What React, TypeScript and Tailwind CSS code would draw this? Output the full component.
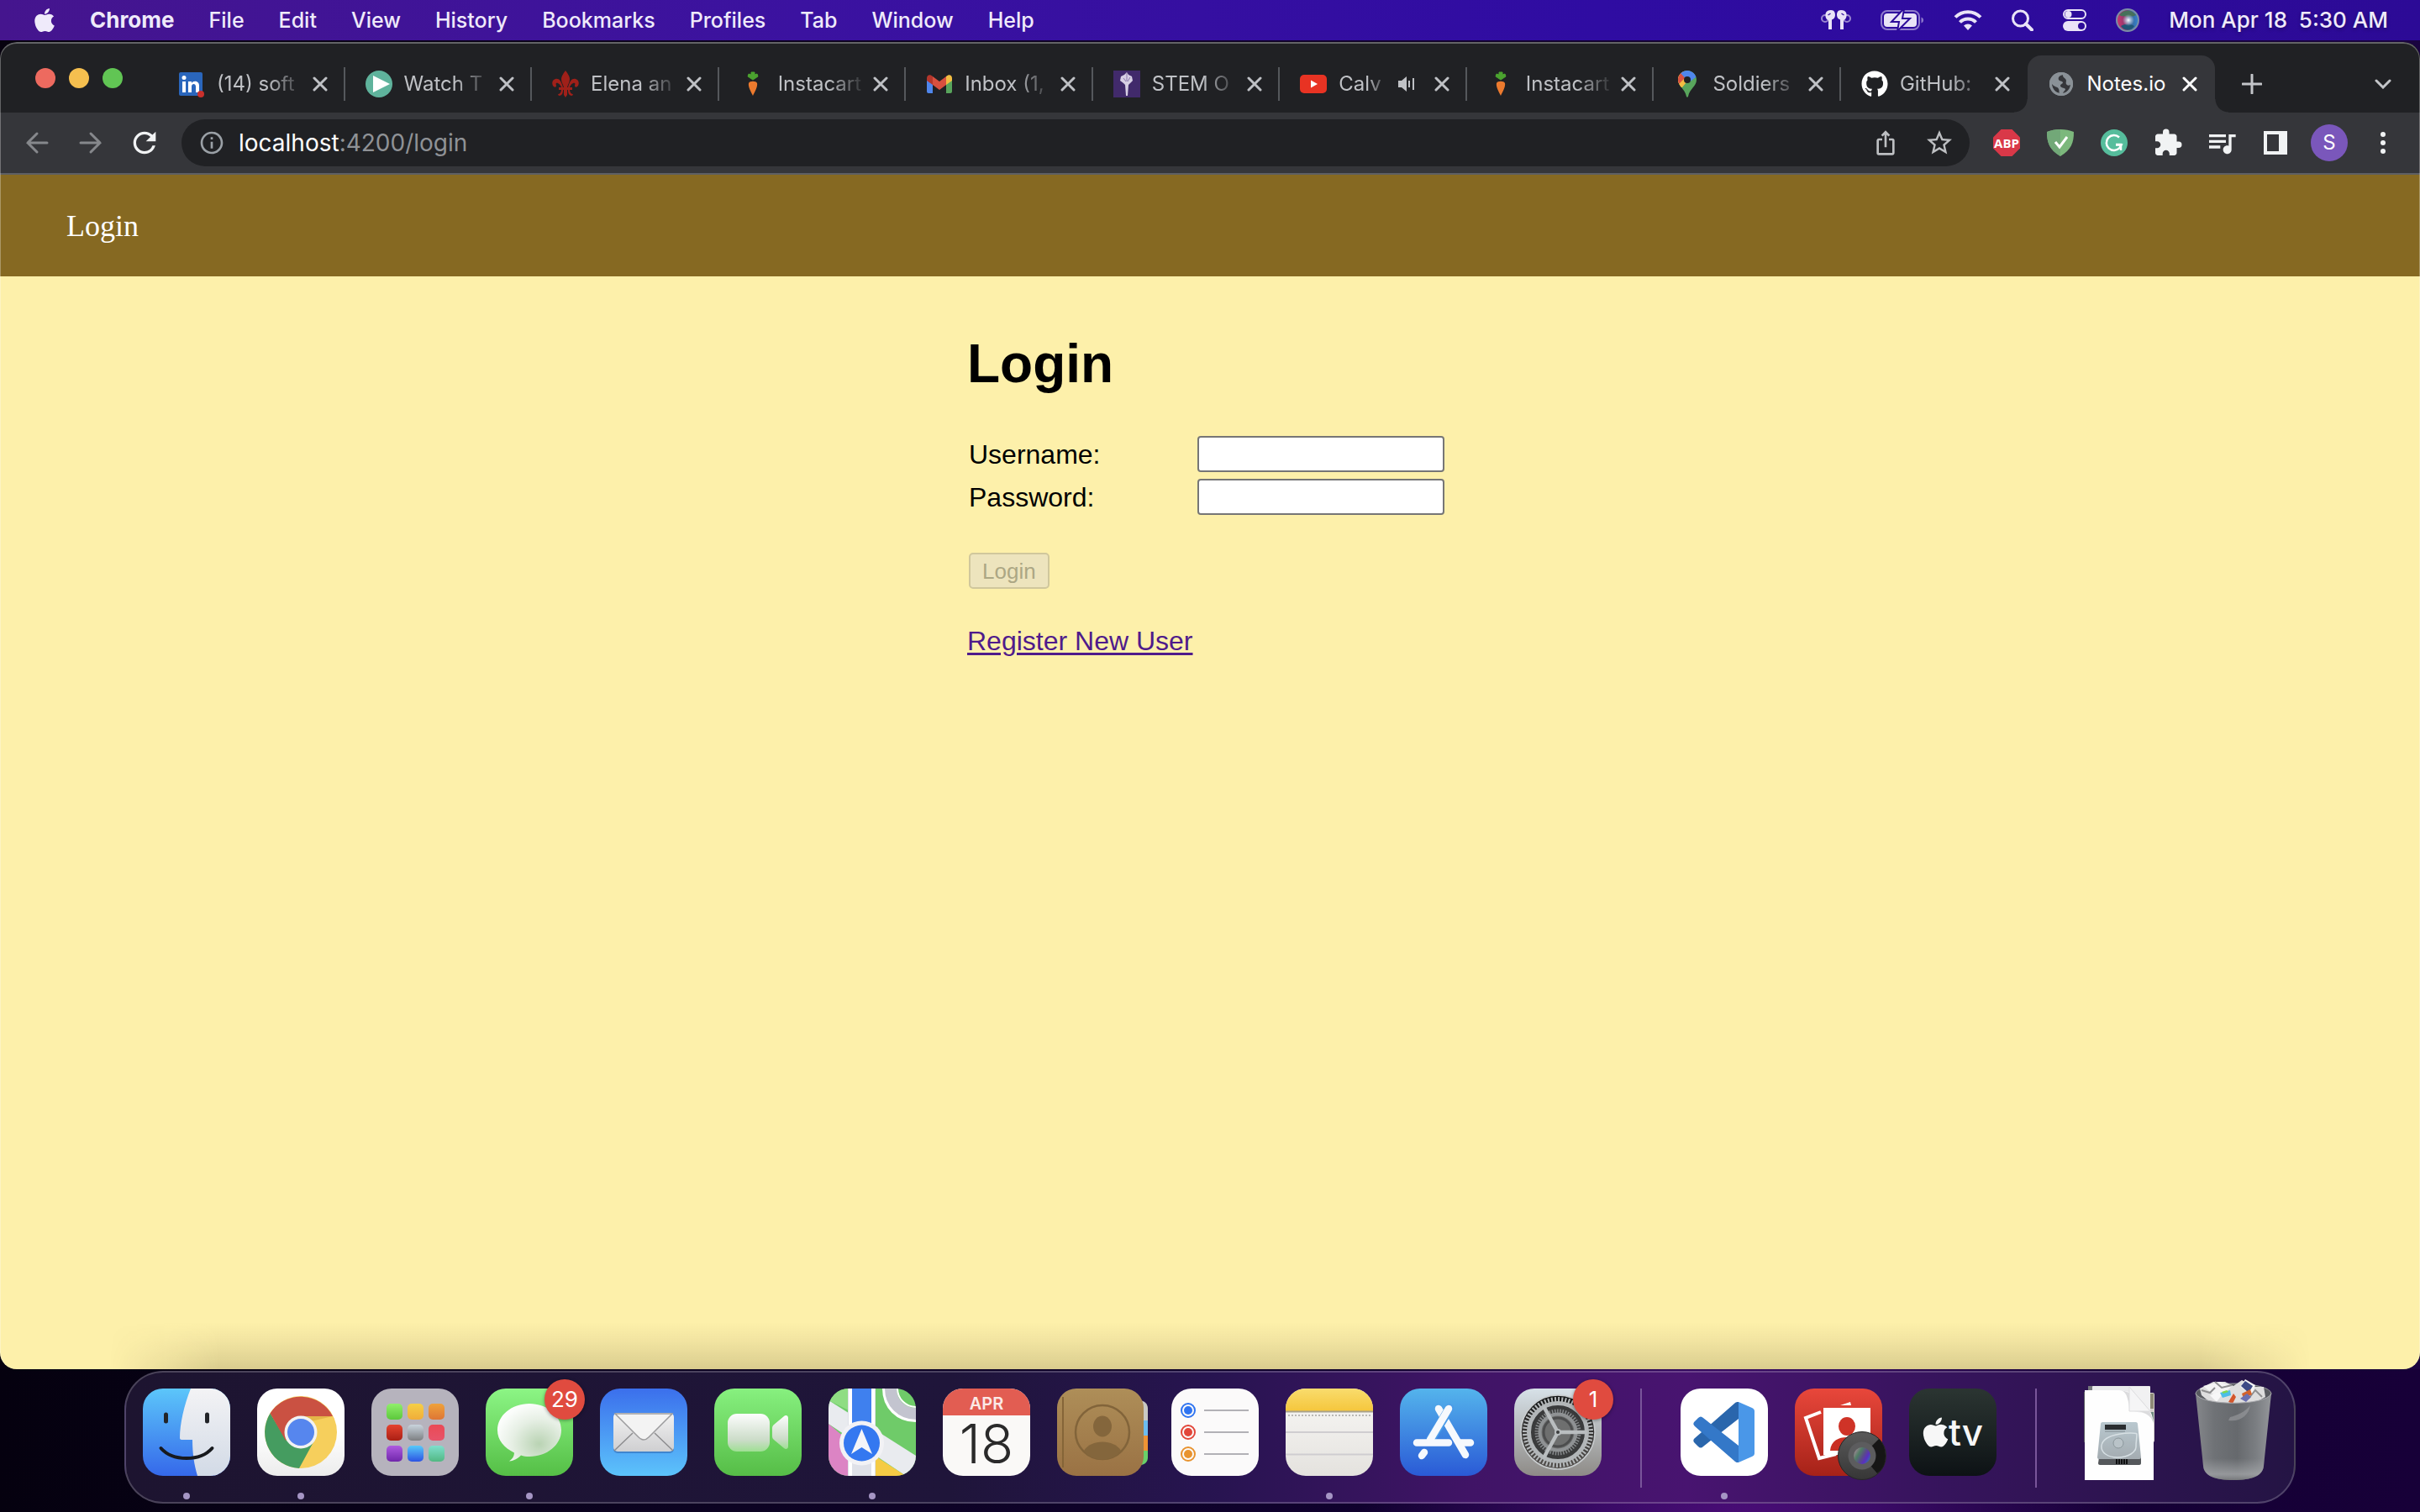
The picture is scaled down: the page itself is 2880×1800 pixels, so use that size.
import React from "react";
import { FaApple, FaGithub } from "react-icons/fa";
import {
  MdExtension,
  MdInfoOutline,
  MdIosShare,
  MdQueueMusic,
  MdRefresh,
  MdStarBorder,
} from "react-icons/md";

/* ---------- menu bar ---------- */

const menus = ["File", "Edit", "View", "History", "Bookmarks", "Profiles", "Tab", "Window", "Help"];

function AirPodsIcon() {
  return (
    <svg width="36" height="26" viewBox="0 0 36 26" aria-hidden="true">
      <circle cx="5" cy="11" r="4" fill="none" stroke="#9a86cf" strokeWidth="2" />
      <circle cx="31" cy="11" r="4" fill="none" stroke="#9a86cf" strokeWidth="2" />
      <path d="M12 1c4 0 5 3 5 6s-2 5-4 5.500V24H9V13C5 12 5 6 6 4s3-3 6-3z" fill="#e9e3f7" />
      <path d="M24 1c-4 0-5 3-5 6s2 5 4 5.500V24h4V13c4-1 4-7 3-9s-3-3-6-3z" fill="#e9e3f7" />
      <path d="M8.500 7l3-2M27.500 7l-3-2" stroke="#3a1a9f" strokeWidth="1.500" />
    </svg>
  );
}

function BatteryIcon() {
  return (
    <svg width="52" height="26" viewBox="0 0 52 26" aria-hidden="true">
      <rect x="1" y="2" width="45" height="22" rx="7" fill="none" stroke="#8f7bcc" strokeWidth="2" />
      <path d="M48.500 9.500c2 1 2.500 2 2.500 3.500s-.5 2.500-2.500 3.500z" fill="#8f7bcc" />
      <rect x="4" y="5" width="39" height="16" rx="4" fill="#e9e3f7" />
      <path d="M27 0L13 15h9l-2 11 15-15h-9l2-11z" fill="#e9e3f7" stroke="#2d0b99" strokeWidth="2" />
    </svg>
  );
}

function WifiIcon() {
  return (
    <svg width="34" height="26" viewBox="0 0 34 26" aria-hidden="true">
      <g fill="none" stroke="#e9e3f7" strokeWidth="4">
        <path d="M2 9.500C10 1 24 1 32 9.500" />
        <path d="M7.500 15.500c5-5.300 14-5.300 19 0" />
      </g>
      <path d="M12 19.500c3-2.700 7-2.700 10 0l-5 5.500z" fill="#e9e3f7" />
    </svg>
  );
}

function SpotlightIcon() {
  return (
    <svg width="26" height="26" viewBox="0 0 26 26" aria-hidden="true">
      <circle cx="10.500" cy="11" r="9" fill="none" stroke="#e9e3f7" strokeWidth="3" />
      <path d="M17 17.500l7 7" stroke="#e9e3f7" strokeWidth="4" strokeLinecap="round" />
    </svg>
  );
}

function ControlCenterIcon() {
  return (
    <svg width="28" height="26" viewBox="0 0 28 26" aria-hidden="true">
      <rect x="1" y="1" width="26" height="10" rx="5" fill="none" stroke="#e9e3f7" strokeWidth="2" />
      <circle cx="6.500" cy="6" r="4" fill="#e9e3f7" />
      <rect x="0" y="14" width="28" height="12" rx="6" fill="#e9e3f7" />
      <circle cx="22" cy="20" r="4" fill="#2d0b99" />
    </svg>
  );
}

function SiriIcon() {
  return (
    <svg width="28" height="28" viewBox="0 0 28 28" aria-hidden="true">
      <defs>
        <radialGradient id="siriGlow">
          <stop offset="0" stopColor="#ffffff" />
          <stop offset="0.350" stopColor="#dcebf8" stopOpacity="0.700" />
          <stop offset="1" stopColor="#cfe4f5" stopOpacity="0" />
        </radialGradient>
        <linearGradient id="siriBase" x1="0" y1="0.500" x2="1" y2="0.500">
          <stop offset="0" stopColor="#d0356f" />
          <stop offset="0.400" stopColor="#8d3b6e" />
          <stop offset="0.600" stopColor="#3d5f8f" />
          <stop offset="1" stopColor="#2f86d4" />
        </linearGradient>
      </defs>
      <circle cx="14" cy="14" r="13" fill="url(#siriBase)" stroke="#7c8ea6" strokeWidth="2" />
      <path d="M4 8C9 1 19 1 24 8c-3 2-7 1-10 2-3-1-7 0-10-2z" fill="#46705a" />
      <path d="M6 21c5-3 11-3 16 0-4 6-12 6-16 0z" fill="#1f5676" />
      <circle cx="15" cy="14" r="7" fill="url(#siriGlow)" />
    </svg>
  );
}

function MenuBar() {
  return (
    <header className="flex h-12 shrink-0 items-center justify-between bg-[linear-gradient(90deg,#45158e_0%,#3b12a0_33%,#2f0ca2_66%,#2c0a96_100%)] text-[26px] leading-8 text-[#efeafa] [text-shadow:0_2px_4px_rgba(0,0,0,0.3)]">
      <nav className="flex items-center gap-[41px] pl-10">
        <button aria-label="Apple menu" className="w-[26px]">
          <FaApple className="h-8 w-[26px]" />
        </button>
        <button className="font-bold">Chrome</button>
        {menus.map((m) => (
          <button key={m} className="text-[25px] font-medium">
            {m}
          </button>
        ))}
      </nav>
      <div className="flex items-center gap-[35px] pr-[38px]">
        <AirPodsIcon />
        <BatteryIcon />
        <WifiIcon />
        <SpotlightIcon />
        <ControlCenterIcon />
        <SiriIcon />
        <time className="font-medium whitespace-pre">Mon Apr 18  5:30 AM</time>
      </div>
    </header>
  );
}

/* ---------- browser tabs ---------- */

const LinkedInIcon = () => (
  <svg width="32" height="32" viewBox="0 0 32 32" aria-hidden="true">
    <rect x="1" y="2" width="28" height="28" rx="2" fill="#2a66bc" />
    <g fill="#fff">
      <rect x="5" y="13" width="4" height="13" />
      <circle cx="7" cy="8.500" r="2.500" />
      <path d="M12 13h4v2c2-3.500 9-3 9 3v8h-4v-7c0-4-5-4-5 0v7h-4z" />
    </g>
    <circle cx="27" cy="28" r="4" fill="#c9302c" />
  </svg>
);

const PlayIcon = () => (
  <svg width="32" height="32" viewBox="0 0 32 32" aria-hidden="true">
    <circle cx="16" cy="16" r="16" fill="#5fb39c" />
    <path d="M9 6l20 10L9 26z" fill="#fff" />
  </svg>
);

const FleurIcon = () => (
  <svg width="32" height="32" viewBox="0 0 32 32" aria-hidden="true" fill="#a02019">
    <path d="M16 0c3 4 5 7 5 10 0 4-2 6-3 10h-4c-1-4-3-6-3-10 0-3 2-6 5-10z" />
    <path d="M13 20C11 12 8 9 4 10c-4 1-5 6-2 9 1 1 3 1 3-1 0-1-1-2 0-3 2-1 5 2 6 5zM19 20c2-8 5-11 9-10 4 1 5 6 2 9-1 1-3 1-3-1 0-1 1-2 0-3-2-1-5 2-6 5z" />
    <rect x="8" y="20" width="16" height="3" />
    <path d="M14 23h4v6l-2 3-2-3zM11 23h2c0 4-1 7-5 7l-1-2c2 0 4-2 4-5zM21 23h-2c0 4 1 7 5 7l1-2c-2 0-4-2-4-5z" />
  </svg>
);

const CarrotIcon = () => (
  <svg width="32" height="32" viewBox="0 0 32 32" aria-hidden="true">
    <path d="M16 11l-6-4 1-3 3 1V2h4v3l3-1 1 3z" fill="#4ba32f" stroke="#4ba32f" strokeLinejoin="round" />
    <path d="M11 15c1-3 9-3 10 0 1 4-3 11-5 15-2-4-6-11-5-15z" fill="#ec7a2e" />
  </svg>
);

const GmailIcon = () => (
  <svg width="32" height="32" viewBox="0 0 32 32" aria-hidden="true">
    <path d="M1 10h7v17H3a2 2 0 01-2-2z" fill="#4f86ec" />
    <path d="M24 10h7v15a2 2 0 01-2 2h-5z" fill="#58a55c" />
    <path d="M24 13V7c3-3 7-2 7 2v3l-7 5z" fill="#f2bd42" />
    <path d="M1 12V9c0-4 4-5 7-2v10z" fill="#b3362c" />
    <path d="M8 7l8 6 8-6v10l-8 6-8-6z" fill="#d8503f" />
  </svg>
);

const TorchIcon = () => (
  <svg width="32" height="32" viewBox="0 0 32 32" aria-hidden="true">
    <rect width="32" height="32" fill="#412a6b" />
    <path d="M16 2l2 3 4 2 1 5-3 3-2 2-1 13h-2l-1-13-2-2-4-3 1-5 4-2z" fill="#d7cfe4" />
    <path d="M16 3v10M12 9l3 4M20 8l-3 5" stroke="#8b78ab" />
  </svg>
);

const YouTubeIcon = () => (
  <svg width="32" height="32" viewBox="0 0 32 32" aria-hidden="true">
    <rect y="5" width="32" height="22" rx="5" fill="#e83323" />
    <path d="M13 11.500l8 4.500-8 4.500z" fill="#fff" />
  </svg>
);

const MapPinIcon = () => (
  <svg width="32" height="32" viewBox="0 0 32 32" aria-hidden="true">
    <defs>
      <clipPath id="pinShape">
        <path d="M16 0c6 0 11 5 11 11 0 8-8 10-10 20-.3 1-1.700 1-2 0C13 21 5 19 5 11 5 5 10 0 16 0z" />
      </clipPath>
    </defs>
    <g clipPath="url(#pinShape)">
      <rect width="32" height="32" fill="#58a55c" />
      <path d="M0 0h12l8 8-10 12H0z" fill="#f2bd42" />
      <path d="M3 8l5-5 8 8-8 9z" fill="#f2bd42" />
      <path d="M0 0h10l4 8-8 8H0z" fill="#d85140" />
      <path d="M8 3l4-4h18v6L18 14z" fill="#4f86ec" />
    </g>
    <circle cx="16" cy="11" r="4" fill="#202124" />
  </svg>
);

const GlobeIcon = () => (
  <svg width="32" height="32" viewBox="0 0 32 32" aria-hidden="true">
    <circle cx="16" cy="16" r="14" fill="#8a9197" />
    <path
      d="M18 5c-4 1-6 3-5 6 1 2 4 1 5 3 0 2-3 2-3 4 0 3 5 2 6 4 0 2-3 3-3 6 6-1 9-6 9-11-2 1-4 1-5-1s1-4-1-6-3-2-3-5z"
      fill="#35363a"
    />
    <path d="M5 16c0 6 4 10 9 11-1-2 0-3-1-5-1-3-5-2-8-6z" fill="#35363a" />
    <circle cx="16" cy="16" r="12.500" fill="none" stroke="#8a9197" strokeWidth="3" />
  </svg>
);

const SpeakerIcon = () => (
  <svg width="20" height="20" viewBox="0 0 20 20" aria-hidden="true" className="shrink-0">
    <path d="M0 6h4l6-5v18l-6-5H0z" fill="#bfc1c5" />
    <path d="M13 6v8M18 3v14" stroke="#bfc1c5" strokeWidth="2" />
  </svg>
);

type TabItem = { title: string; icon: React.ReactNode; audio?: boolean };

const tabs: TabItem[] = [
  { title: "(14) soft", icon: <LinkedInIcon /> },
  { title: "Watch T", icon: <PlayIcon /> },
  { title: "Elena an", icon: <FleurIcon /> },
  { title: "Instacart", icon: <CarrotIcon /> },
  { title: "Inbox (1,", icon: <GmailIcon /> },
  { title: "STEM O", icon: <TorchIcon /> },
  { title: "Calv", icon: <YouTubeIcon />, audio: true },
  { title: "Instacart", icon: <CarrotIcon /> },
  { title: "Soldiers", icon: <MapPinIcon /> },
  { title: "GitHub:", icon: <FaGithub className="size-8 text-white" /> },
];

function CloseButton({ label, color }: { label: string; color: string }) {
  return (
    <button aria-label={`Close ${label}`} className="flex size-8 shrink-0 items-center justify-center">
      <svg width="18" height="18" viewBox="0 0 18 18" aria-hidden="true">
        <path d="M2 2l14 14M16 2L2 16" stroke={color} strokeWidth="3" strokeLinecap="round" />
      </svg>
    </button>
  );
}

function TabStrip() {
  return (
    <div className="flex h-[82px] bg-[#202124]">
      <div className="flex items-center gap-4 px-[42px]">
        <button aria-label="Close window" className="size-6 rounded-full bg-[#ed6a5f]" />
        <button aria-label="Minimize window" className="size-6 rounded-full bg-[#f5bf4f]" />
        <button aria-label="Zoom window" className="size-6 rounded-full bg-[#61c554]" />
      </div>
      <div role="tablist" className="flex h-[68px] min-w-0 flex-1 self-end text-2xl">
        {tabs.map((t, i) => (
          <div key={i} className="flex min-w-0 flex-1 basis-0 items-center">
            <div role="tab" className="flex min-w-0 flex-1 items-center pl-6">
              <span className="mr-3.5 size-8 shrink-0">{t.icon}</span>
              <span className="mr-1.5 min-w-0 flex-1 overflow-hidden whitespace-nowrap text-[#bfc1c5] [mask-image:linear-gradient(to_right,black_60%,transparent_105%)]">
                {t.title}
              </span>
              {t.audio && (
                <span className="mr-4 ml-2">
                  <SpeakerIcon />
                </span>
              )}
            </div>
            <CloseButton label={t.title} color="#bfc1c5" />
            <span className={i < tabs.length - 1 ? "ml-3 h-10 w-0.5 bg-[#55585c]" : "ml-3 h-10 w-0.5"} />
          </div>
        ))}
        <div className="relative flex min-w-0 flex-1 basis-0 items-center rounded-t-2xl bg-[#35363a]">
          <span className="absolute bottom-0 -left-4 size-4 bg-[radial-gradient(circle_at_0_0,transparent_15px,#35363a_16px)]" />
          <span className="absolute -right-4 bottom-0 size-4 bg-[radial-gradient(circle_at_100%_0,transparent_15px,#35363a_16px)]" />
          <div role="tab" aria-selected="true" className="flex min-w-0 flex-1 items-center pl-6">
            <span className="mr-3.5 size-8 shrink-0">
              <GlobeIcon />
            </span>
            <span className="whitespace-nowrap text-white">Notes.io</span>
          </div>
          <CloseButton label="Notes.io" color="#ffffff" />
          <span className="ml-3 w-0.5" />
        </div>
      </div>
      <div className="flex h-[68px] w-[244px] items-center justify-between self-end px-7">
        <button aria-label="New tab" className="flex size-8 items-center justify-center">
          <svg width="24" height="24" viewBox="0 0 24 24" aria-hidden="true">
            <path d="M12 1v22M1 12h22" stroke="#c3c5c9" strokeWidth="3" strokeLinecap="round" />
          </svg>
        </button>
        <button aria-label="Search tabs" className="flex size-8 items-center justify-center">
          <svg width="20" height="12" viewBox="0 0 20 12" aria-hidden="true">
            <path d="M2 2l8 8 8-8" fill="none" stroke="#c3c5c9" strokeWidth="3" strokeLinecap="round" />
          </svg>
        </button>
      </div>
    </div>
  );
}

/* ---------- browser toolbar ---------- */

function ArrowIcon({ flip }: { flip?: boolean }) {
  return (
    <svg width="28" height="28" viewBox="0 0 28 28" aria-hidden="true" className={flip ? "rotate-180" : ""}>
      <path d="M26 14H3M14 3L3 14l11 11" fill="none" stroke="#86888c" strokeWidth="3" strokeLinecap="round" />
    </svg>
  );
}

function Toolbar() {
  return (
    <div className="flex h-[74px] items-center border-b-2 border-[#5d5f64] bg-[#35363a]">
      <div className="flex items-center gap-8 px-7">
        <button aria-label="Back" className="flex size-8 items-center justify-center">
          <ArrowIcon />
        </button>
        <button aria-label="Forward" className="flex size-8 items-center justify-center">
          <ArrowIcon flip />
        </button>
        <button aria-label="Reload" className="flex size-8 items-center justify-center">
          <MdRefresh className="size-10 shrink-0 text-[#f1f3f4]" />
        </button>
      </div>
      <div className="flex h-14 flex-1 items-center rounded-full bg-[#202124] px-5">
        <button aria-label="Site information" className="mr-4">
          <MdInfoOutline className="size-8 text-[#9aa0a6]" />
        </button>
        <div role="textbox" aria-label="Address" className="flex-1 text-[28px] leading-9 text-[#8f9296]">
          <span className="text-white">localhost</span>:4200/login
        </div>
        <div className="flex gap-8 text-[#bdbfc2]">
          <button aria-label="Share" className="flex size-8 items-center justify-center">
            <MdIosShare className="size-8 shrink-0" />
          </button>
          <button aria-label="Bookmark" className="flex size-8 items-center justify-center">
            <MdStarBorder className="size-9 shrink-0" />
          </button>
        </div>
      </div>
      <div className="flex items-center gap-8 px-7 text-[#f1f3f4]">
        <button aria-label="AdBlock" className="relative flex size-8 items-center justify-center">
          <svg width="32" height="32" viewBox="0 0 32 32" aria-hidden="true" className="absolute">
            <path d="M9.500 0h13L32 9.500v13L22.500 32h-13L0 22.500v-13z" fill="#d93848" />
          </svg>
          <span className="relative font-['Open_Sans'] text-[15px] leading-4 font-bold text-white">ABP</span>
        </button>
        <button aria-label="AdGuard">
          <svg width="32" height="32" viewBox="0 0 32 32" aria-hidden="true">
            <path d="M16 0c6 0 11 1 16 3 0 13-3 21-16 29C3 24 0 16 0 3c5-2 10-3 16-3z" fill="#7cb87c" />
            <path d="M16 0v32C3 24 0 16 0 3c5-2 10-3 16-3z" fill="#72a878" />
            <path d="M10 15l5 6 9-12" fill="none" stroke="#fff" strokeWidth="3" />
          </svg>
        </button>
        <button aria-label="Grammarly">
          <svg width="32" height="32" viewBox="0 0 32 32" aria-hidden="true">
            <circle cx="16" cy="16" r="16" fill="#56bd9c" />
            <path d="M22 9.500A9 9 0 1022.500 22l2-3.500H18" fill="none" stroke="#fff" strokeWidth="2.500" />
            <path d="M24 25v-7h-6" fill="none" stroke="#fff" strokeWidth="2.500" />
          </svg>
        </button>
        <button aria-label="Extensions" className="flex size-8 items-center justify-center">
          <MdExtension className="size-9 shrink-0" />
        </button>
        <button aria-label="Media controls" className="flex size-8 items-center justify-center">
          <MdQueueMusic className="size-10 shrink-0" />
        </button>
        <button aria-label="Side panel" className="flex size-8 items-center justify-center">
          <svg width="28" height="28" viewBox="0 0 28 28" aria-hidden="true">
            <path d="M0 0h28v28H0z M4 4v20h14V4z" fill="#f1f3f4" fillRule="evenodd" />
          </svg>
        </button>
        <button
          aria-label="Profile"
          className="-mx-1.5 flex size-11 items-center justify-center rounded-full bg-[#7a57bb] text-2xl text-white"
        >
          S
        </button>
        <button aria-label="Menu" className="flex size-8 items-center justify-center">
          <svg width="6" height="28" viewBox="0 0 6 28" aria-hidden="true" fill="#f1f3f4">
            <circle cx="3" cy="4" r="3" />
            <circle cx="3" cy="14" r="3" />
            <circle cx="3" cy="24" r="3" />
          </svg>
        </button>
      </div>
    </div>
  );
}

/* ---------- web page ---------- */

function LoginPage() {
  return (
    <div className="flex flex-1 flex-col bg-[#fdf0aa] font-['Liberation_Sans',sans-serif] text-black">
      <nav className="flex h-[121px] items-center bg-[#866922] pl-[79px]">
        <a href="#login" className="font-['Liberation_Serif',serif] text-4xl text-white">
          Login
        </a>
      </nav>
      <main className="mx-auto w-[578px] pt-[72px] text-[32px] leading-8">
        <h1 className="text-[64px] leading-[64px] font-bold">Login</h1>
        <form className="mt-[54px]">
          <div className="grid grid-cols-[274px_294px] items-center gap-y-2">
            <label htmlFor="username" className="pl-0.5">
              Username:
            </label>
            <input
              id="username"
              type="text"
              className="h-[43px] rounded-[4px] border-2 border-[#767676] bg-white px-1 text-[26px]"
            />
            <label htmlFor="password" className="pl-0.5">
              Password:
            </label>
            <input
              id="password"
              type="password"
              className="h-[43px] rounded-[4px] border-2 border-[#767676] bg-white px-1 text-[26px]"
            />
          </div>
          <button
            type="submit"
            disabled
            className="mt-[45px] ml-0.5 block h-[43px] rounded-[5px] border-2 border-[#d0c79c] bg-[#ede4bd] px-3.5 text-[26px] leading-8 text-[#aca784]"
          >
            Login
          </button>
        </form>
        <a
          href="#register"
          className="mt-[46px] inline-block text-[#4f1b8b] underline decoration-[3px] underline-offset-[3px]"
        >
          Register New User
        </a>
      </main>
      <div className="mx-auto mt-auto h-[56px] w-[91%] bg-[linear-gradient(to_bottom,transparent,rgba(60,45,20,0.06)_40%,rgba(60,45,20,0.18))] [mask-image:linear-gradient(to_right,transparent,black_5%,black_95%,transparent)]" />
    </div>
  );
}

/* ---------- dock ---------- */

function FinderIcon() {
  return (
    <svg viewBox="0 0 104 104" className="size-full" aria-hidden="true">
      <defs>
        <linearGradient id="finderBlue" x1="0" y1="0" x2="0" y2="1">
          <stop offset="0" stopColor="#5cc6fa" />
          <stop offset="1" stopColor="#3568ea" />
        </linearGradient>
        <linearGradient id="finderWhite" x1="0" y1="0" x2="0" y2="1">
          <stop offset="0" stopColor="#f3f3f5" />
          <stop offset="1" stopColor="#d2dae6" />
        </linearGradient>
      </defs>
      <rect width="104" height="104" fill="url(#finderBlue)" />
      <path d="M57 0C49 20 44 42 44 59c0 1 1 2 2 2h13c0 16 2 30 6 43h39V0z" fill="url(#finderWhite)" />
      <path d="M27.500 31v8M76.500 31v8" stroke="#222428" strokeWidth="5" strokeLinecap="round" />
      <path d="M21.500 71c14 16 47 16 61 0" fill="none" stroke="#17191d" strokeWidth="4" strokeLinecap="round" />
    </svg>
  );
}

function ChromeIcon() {
  return (
    <svg viewBox="0 0 104 104" className="size-full" aria-hidden="true">
      <defs>
        <linearGradient id="chromePlate" x1="0" y1="0" x2="0" y2="1">
          <stop offset="0.500" stopColor="#fff" />
          <stop offset="1" stopColor="#ececec" />
        </linearGradient>
      </defs>
      <rect width="104" height="104" fill="url(#chromePlate)" />
      <circle cx="52" cy="52" r="43" fill="#f6cf5c" />
      <path d="M15.500 29.500A43 43 0 0050 95L68 62 52 71 35 62z" fill="#459c60" />
      <path d="M15.500 29.500A43 43 0 0190 33H52L34 62z" fill="#ca5142" />
      <path d="M52 33h38l-26 6z" fill="#d9a43b" opacity="0.600" />
      <circle cx="52" cy="52" r="19.500" fill="#f2f2f2" />
      <circle cx="52" cy="52" r="16" fill="#5686ee" />
    </svg>
  );
}

const launchCells = [
  ["#90ef6b", "#5cc83c"],
  ["#f6cf46", "#f0ad3a"],
  ["#efa23b", "#de7635"],
  ["#e5432f", "#aa1f14"],
  ["#c9d4dd", "#7d7f82"],
  ["#ea4a55", "#e7546a"],
  ["#ae5be0", "#7027ab"],
  ["#57c9fa", "#2c53e3"],
  ["#7fdfcd", "#52b883"],
];

function LaunchpadIcon() {
  return (
    <div className="grid size-full grid-cols-[19px_19px_19px] place-content-center gap-[6px] bg-[#b6b3bd]">
      {launchCells.map(([a, b]) => (
        <span
          key={a}
          className="size-[19px] rounded-[5px]"
          style={{ backgroundImage: `linear-gradient(${a}, ${b})` }}
        />
      ))}
    </div>
  );
}

function MessagesIcon() {
  return (
    <svg viewBox="0 0 104 104" className="size-full" aria-hidden="true">
      <defs>
        <linearGradient id="msgGreen" x1="0" y1="0" x2="0" y2="1">
          <stop offset="0" stopColor="#8cf585" />
          <stop offset="1" stopColor="#55bf46" />
        </linearGradient>
        <radialGradient id="msgBubble" cx="0.650" cy="0.700" r="0.700">
          <stop offset="0" stopColor="#b9d3b3" />
          <stop offset="0.600" stopColor="#e6efe4" />
          <stop offset="1" stopColor="#fbfdfb" />
        </radialGradient>
      </defs>
      <rect width="104" height="104" fill="url(#msgGreen)" />
      <path
        d="M52 18c21 0 38 14 38 31.500S73 81 52 81c-4 0-7-.5-10-1.500-4 4-8 6.500-14 7 4-3 6-6 6-10-12-6-20-15-20-27C14 32 31 18 52 18z"
        fill="url(#msgBubble)"
      />
    </svg>
  );
}

function MailIcon() {
  return (
    <svg viewBox="0 0 104 104" className="size-full" aria-hidden="true">
      <defs>
        <linearGradient id="mailBlue" x1="0" y1="0" x2="0" y2="1">
          <stop offset="0" stopColor="#3b6fec" />
          <stop offset="1" stopColor="#5cc3fb" />
        </linearGradient>
        <linearGradient id="mailPaper" x1="0" y1="0" x2="0" y2="1">
          <stop offset="0" stopColor="#f2f2f2" />
          <stop offset="1" stopColor="#cfcfd1" />
        </linearGradient>
      </defs>
      <rect width="104" height="104" fill="url(#mailBlue)" />
      <rect x="16" y="31" width="72" height="46" rx="5" fill="#2c5da8" opacity="0.500" />
      <rect x="16" y="29" width="72" height="46" rx="5" fill="url(#mailPaper)" />
      <path d="M17 74l22-21M87 74L65 53" stroke="#8d8d8f" strokeWidth="1.500" />
      <path d="M18 30l28 28c4 4 8 4 12 0l28-28z" fill="#f3f3f3" stroke="#9c9c9e" strokeWidth="1.500" />
    </svg>
  );
}

function FaceTimeIcon() {
  return (
    <svg viewBox="0 0 104 104" className="size-full" aria-hidden="true">
      <defs>
        <linearGradient id="ftWhite" x1="0" y1="0" x2="0" y2="1">
          <stop offset="0" stopColor="#fdfdfd" />
          <stop offset="0.700" stopColor="#cbdcc8" />
          <stop offset="1" stopColor="#9fdf94" />
        </linearGradient>
        <linearGradient id="ftGreen" x1="0" y1="0" x2="0" y2="1">
          <stop offset="0" stopColor="#87f07f" />
          <stop offset="1" stopColor="#56bd47" />
        </linearGradient>
      </defs>
      <rect width="104" height="104" fill="url(#ftGreen)" />
      <rect x="16" y="30" width="50" height="45" rx="11" fill="url(#ftWhite)" />
      <path d="M69 47c0-2 1-3 2-4l12-10c2-2 5-1 5 2v34c0 3-3 4-5 2L71 61c-1-1-2-2-2-4z" fill="url(#ftWhite)" />
    </svg>
  );
}

function MapsIcon() {
  return (
    <svg viewBox="0 0 104 104" className="size-full" aria-hidden="true">
      <rect width="104" height="104" fill="#6fcb69" />
      <path d="M0 0h24v26L0 14z" fill="#8fdd83" />
      <path d="M0 42l26 22v40H0z" fill="#dc84c4" />
      <path d="M0 14l104 66v24H92L0 42z" fill="#e9ebef" />
      <path d="M55 80l37 24H55z" fill="#f5cb45" />
      <rect x="23" width="33" height="104" fill="#dfe1e8" />
      <rect x="24" width="4" height="104" fill="#fff" />
      <rect x="51" width="4" height="104" fill="#fff" />
      <rect x="28" width="23" height="60" fill="#3f80ee" />
      <path d="M66 0c0 22 16 38 38 38" fill="none" stroke="#fff" strokeWidth="4" />
      <path d="M74 0c0 17 13 30 30 30" fill="none" stroke="#c3c4cf" strokeWidth="14" />
      <path d="M82 0c0 12 10 22 22 22" fill="none" stroke="#fff" strokeWidth="2" />
      <circle cx="39.500" cy="65" r="26.500" fill="#f2f2f5" />
      <circle cx="39.500" cy="65" r="21.500" fill="#3478f0" />
      <path d="M39.500 48L52 78l-12.500-8L27 78z" fill="#f4f5f8" />
    </svg>
  );
}

function CalendarIcon() {
  return (
    <div className="flex size-full flex-col items-center bg-[#faf9f7]">
      <span className="h-8 w-full bg-[#e25d52] pt-1 text-center text-xl leading-7 font-semibold text-[#fbe9e6]">
        APR
      </span>
      <span className="text-[64px] leading-[68px] font-light text-[#2a2a2a]">18</span>
    </div>
  );
}

function ContactsIcon() {
  return (
    <svg viewBox="0 0 110 104" className="h-[104px] w-[110px] max-w-none" aria-hidden="true">
      <defs>
        <linearGradient id="leather" x1="0" y1="0" x2="0" y2="1">
          <stop offset="0" stopColor="#ae8e58" />
          <stop offset="1" stopColor="#9a7244" />
        </linearGradient>
      </defs>
      <path d="M96 14c8 0 12 4 12 10v14H96z" fill="#c9c9c4" />
      <rect x="96" y="38" width="12" height="18" fill="#6cbcf0" />
      <rect x="96" y="56" width="12" height="18" fill="#ee9334" />
      <path d="M96 74h12v8c0 6-4 9-12 10z" fill="#68d069" />
      <rect width="103" height="104" rx="23" fill="url(#leather)" />
      <path d="M7 10v84" stroke="#856538" strokeWidth="2" />
      <circle cx="54" cy="52" r="32" fill="none" stroke="#82643a" strokeWidth="2.500" />
      <ellipse cx="54" cy="45" rx="11" ry="12.500" fill="#84663c" />
      <path d="M32 74c8-14 36-14 44 0-10 14-34 14-44 0z" fill="#84663c" />
    </svg>
  );
}

function RemindersIcon() {
  return (
    <svg viewBox="0 0 104 104" className="size-full" aria-hidden="true">
      <rect width="104" height="104" fill="#fbfafa" />
      {[
        [26, "#2f74f1"],
        [52, "#e2463a"],
        [78, "#e8932f"],
      ].map(([y, c]) => (
        <g key={c}>
          <circle cx="20" cy={y} r="8" fill="none" stroke={c as string} strokeWidth="2" />
          <circle cx="20" cy={y} r="5" fill={c as string} />
          <path d={`M39 ${y}h53`} stroke="#b2b1b6" strokeWidth="2" />
        </g>
      ))}
    </svg>
  );
}

function NotesIcon() {
  return (
    <svg viewBox="0 0 104 104" className="size-full" aria-hidden="true">
      <defs>
        <linearGradient id="notesTop" x1="0" y1="0" x2="0" y2="1">
          <stop offset="0" stopColor="#f9dc6d" />
          <stop offset="1" stopColor="#f5c63c" />
        </linearGradient>
        <linearGradient id="notesPaper" x1="0" y1="0" x2="0" y2="1">
          <stop offset="0" stopColor="#f9f8f6" />
          <stop offset="1" stopColor="#e4e2de" />
        </linearGradient>
      </defs>
      <rect width="104" height="104" fill="url(#notesPaper)" />
      <rect width="104" height="27" fill="url(#notesTop)" />
      <path d="M0 27.500h104" stroke="#a9a18b" strokeWidth="2" />
      <path d="M3 32h100" stroke="#b9b8b6" strokeWidth="2" strokeDasharray="2 2" />
      <path d="M0 52h104M0 78.500h104" stroke="#cfcdd0" strokeWidth="2" />
    </svg>
  );
}

function AppStoreIcon() {
  return (
    <svg viewBox="0 0 104 104" className="size-full" aria-hidden="true">
      <defs>
        <linearGradient id="storeBlue" x1="0" y1="0" x2="0" y2="1">
          <stop offset="0" stopColor="#54b4ec" />
          <stop offset="1" stopColor="#2a5ad6" />
        </linearGradient>
      </defs>
      <rect width="104" height="104" fill="url(#storeBlue)" />
      <g stroke="#f6f9fd" strokeWidth="8.500" strokeLinecap="round">
        <path d="M46 24L78 79" />
        <path d="M59 24L37 60" stroke="#4a9be8" strokeWidth="11" />
        <path d="M58 24L36 61" />
        <path d="M20 64.500h38M72 64.500h12" />
        <path d="M29 76l-3 4" />
      </g>
    </svg>
  );
}

function SettingsIcon() {
  return (
    <svg viewBox="0 0 104 104" className="size-full" aria-hidden="true">
      <defs>
        <linearGradient id="setPlate" x1="0" y1="0" x2="0" y2="1">
          <stop offset="0" stopColor="#d7e1e8" />
          <stop offset="1" stopColor="#8e8b87" />
        </linearGradient>
        <linearGradient id="setWell" x1="0" y1="0" x2="0" y2="1">
          <stop offset="0" stopColor="#131516" />
          <stop offset="1" stopColor="#55514e" />
        </linearGradient>
      </defs>
      <rect width="104" height="104" fill="url(#setPlate)" />
      <circle cx="52" cy="52" r="44" fill="url(#setWell)" stroke="#c8ccce" strokeWidth="1.500" />
      <circle cx="52" cy="52" r="39" fill="none" stroke="#b4b8ba" strokeWidth="6" strokeDasharray="2 2.080" />
      <circle cx="52" cy="52" r="34.500" fill="#3a3b3c" stroke="#b2b6b8" strokeWidth="5" />
      <circle cx="52" cy="52" r="25" fill="none" stroke="#85888a" strokeWidth="5" strokeDasharray="1.500 1.640" />
      <circle cx="52" cy="52" r="21.500" fill="#6e6f6f" stroke="#8f9294" strokeWidth="4" />
      <circle cx="52" cy="52" r="17" fill="none" stroke="#4c4d4e" strokeWidth="3" />
      <g stroke="#b9bdbf" strokeWidth="4.500" strokeLinecap="round">
        <path d="M52 52h33M52 52L36 23M52 52L36 81" />
      </g>
      <circle cx="52" cy="52" r="4" fill="#b9bdbf" />
      <circle cx="52" cy="52" r="2" fill="#3c3d3e" />
    </svg>
  );
}

function CodeIcon() {
  return (
    <svg viewBox="0 0 104 104" className="size-full" aria-hidden="true">
      <rect width="104" height="104" fill="#fff" />
      <path d="M69 16v20L27 69c-2 2-4 2-6 0l-5-5c-1-2-1-3 1-5L65 17c1-1 2-1 4-1z" fill="#2a66ac" />
      <path d="M69 88V68L27 35c-2-2-4-2-6 0l-5 5c-1 2-1 3 1 5l48 42c1 1 2 1 4 1z" fill="#3478c8" />
      <path d="M69 88V16l16 7c2 1 3 2 3 4v50c0 2-1 3-3 4z" fill="#4a97e8" />
    </svg>
  );
}

function PhotoBoothIcon() {
  return (
    <svg viewBox="0 0 110 110" className="size-[110px] max-w-none" aria-hidden="true">
      <defs>
        <linearGradient id="boothRed" x1="0" y1="0" x2="0" y2="1">
          <stop offset="0" stopColor="#e8473b" />
          <stop offset="1" stopColor="#a62218" />
        </linearGradient>
        <linearGradient id="lensBody" x1="0" y1="0" x2="0" y2="1">
          <stop offset="0" stopColor="#5a5a5a" />
          <stop offset="1" stopColor="#363636" />
        </linearGradient>
        <linearGradient id="lensGlass" x1="0" y1="0.200" x2="1" y2="0.800">
          <stop offset="0" stopColor="#a8899a" />
          <stop offset="0.300" stopColor="#4f7d64" />
          <stop offset="0.550" stopColor="#5a4a8a" />
          <stop offset="0.750" stopColor="#5a2fc0" />
          <stop offset="1" stopColor="#2f7aa8" />
        </linearGradient>
      </defs>
      <rect width="104" height="104" rx="23" fill="url(#boothRed)" />
      <path d="M54 20l12-4 1 4z" fill="#fff" />
      <path d="M31 28l-18 7 16 48 20-5" fill="none" stroke="#fff" strokeWidth="4" />
      <rect x="34" y="23" width="56" height="56" fill="#fff" />
      <ellipse cx="62" cy="45" rx="10" ry="11" fill="#cf3327" />
      <path d="M42 74c1-12 10-16 20-16s19 4 20 16z" fill="#c92f23" />
      <circle cx="80" cy="80" r="28.500" fill="url(#lensBody)" stroke="#262626" strokeWidth="1" />
      <path d="M80 80l20-20a28 28 0 018 20c0 10-4 17-10 21z" fill="#161616" />
      <circle cx="80" cy="80" r="16.500" fill="#5c5c5e" />
      <circle cx="80" cy="80" r="10" fill="url(#lensGlass)" />
    </svg>
  );
}

function TvIcon() {
  return (
    <div className="flex size-full items-center justify-center bg-[linear-gradient(#2b3532,#0d1215)] text-[#f7f7f7]">
      <FaApple className="h-10 w-[31px]" />
      <span className="text-[44px] leading-[52px] font-medium">tv</span>
    </div>
  );
}

function DiskImageIcon() {
  return (
    <svg viewBox="0 0 104 128" className="h-32 w-[104px]" aria-hidden="true">
      <defs>
        <linearGradient id="diskSteel" x1="0" y1="0" x2="0" y2="1">
          <stop offset="0" stopColor="#b9c8cf" />
          <stop offset="1" stopColor="#a4acb1" />
        </linearGradient>
        <linearGradient id="foldShade" x1="0" y1="1" x2="1" y2="0">
          <stop offset="0.300" stopColor="#ffffff" />
          <stop offset="0.500" stopColor="#d8d8da" />
          <stop offset="1" stopColor="#f4f4f4" />
        </linearGradient>
      </defs>
      <rect x="10" y="16" width="4" height="60" fill="#54555c" />
      <rect x="15" y="9" width="6" height="8" fill="#76777c" />
      <rect x="84" y="17" width="10" height="59" rx="2" fill="#d4d0cc" />
      <path d="M86 18h7v18h-7z" fill="#8e8a78" />
      <path d="M86 40h7v12h-7z" fill="#6f8a80" />
      <rect x="20" y="9" width="69" height="40" rx="1" fill="#e9e9eb" />
      <path d="M11 14h41c18 0 40 18 41 40v67H11z" fill="#fefefe" />
      <path d="M64 10h25v33L64 38z" fill="#f1f1f2" />
      <path d="M52 14c8 0 11 8 12 24 14 0 26 4 29 16-3-20-20-38-41-40z" fill="url(#foldShade)" />
      <path d="M64 10l25 29H64z" fill="#f5f5f6" stroke="#dcdcde" />
      <path d="M28 94h50v7c0 1-1 2-2 2H29c-1 0-2-1-2-2z" fill="#55585b" />
      <path d="M49 96v6M52 96v6M55 96v6M58 96v6M61 96v6" stroke="#0e0f10" strokeWidth="2" />
      <path d="M32 52h40c1 0 2 1 2 2l4 40c0 1-1 2-2 2H28c-1 0-2-1-2-2l4-40c0-1 1-2 2-2z" fill="url(#diskSteel)" />
      <rect x="35" y="55" width="25" height="6" fill="#2a2d30" />
      <path d="M35 63h24" stroke="#7e898f" />
      <path d="M73 66c-2-2-40-2-42 14-1 8 7 14 19 14s23-6 22-14c0-4 1-10 1-14z" fill="none" stroke="#d7e0e4" strokeWidth="1.500" />
      <circle cx="51" cy="77" r="6" fill="#b9c3c8" stroke="#8c979c" />
    </svg>
  );
}

function TrashIcon() {
  return (
    <svg viewBox="0 0 104 128" className="h-32 w-[104px]" aria-hidden="true">
      <defs>
        <linearGradient id="canBody" x1="0" y1="0" x2="1" y2="0">
          <stop offset="0" stopColor="#85878b" />
          <stop offset="0.250" stopColor="#6f7276" />
          <stop offset="0.550" stopColor="#66696d" />
          <stop offset="0.800" stopColor="#7b7e82" />
          <stop offset="1" stopColor="#94969a" />
        </linearGradient>
        <linearGradient id="canFloor" x1="0" y1="0" x2="0" y2="1">
          <stop offset="0.750" stopColor="#a7a9ac" stopOpacity="0" />
          <stop offset="0.930" stopColor="#a7a9ac" stopOpacity="0.700" />
          <stop offset="1" stopColor="#77797c" stopOpacity="0.900" />
        </linearGradient>
      </defs>
      <ellipse cx="52" cy="18" rx="45" ry="12" fill="#595b60" stroke="#9a9ba0" />
      <path d="M12 12l16-8 14 0 10 5 10-7 14 8 12 0 2 12-14 8H26L14 20z" fill="#dedede" />
      <path d="M16 9l20-5 14 5-8 8-14 2zM60 10l6-9 12 7-4 12z" fill="#f4f4f4" />
      <path d="M30 4l8 7 12-3M14 14l10 3 6-6M70 24l8-10 8 8" fill="none" stroke="#8f8f90" strokeWidth="2" />
      <path d="M24 20l18-6-10 14z" fill="#f7f7f7" />
      <path d="M36 17l12-3 1 6-10 3z" fill="#4dbde8" />
      <path d="M38 16l6-2 2 2-6 2z" fill="#7fd850" />
      <path d="M46 28l6-10 3 4-4 8z" fill="#d4572c" />
      <path d="M61 9l5-6 9 6-5 8z" fill="#3d4a86" />
      <path d="M62 18l10-5 2 6-10 5z" fill="#d2622c" />
      <path d="M60 24l8-6 5 4-6 6z" fill="#6a6fb0" />
      <path d="M7 18c6 15 84 15 90 0l-9 86c-1 12-14 17-36 17s-35-5-36-17z" fill="url(#canBody)" />
      <path d="M7 18c6 15 84 15 90 0l-9 86c-1 12-14 17-36 17s-35-5-36-17z" fill="url(#canFloor)" />
      <path d="M48 46c8-2 18-6 24-14-2 12-12 20-26 18z" fill="#9b9da0" opacity="0.600" />
      <path d="M7 18c6 15 84 15 90 0" fill="none" stroke="#a8a9ad" />
    </svg>
  );
}

type DockItem = { name: string; icon: React.ReactNode; open?: boolean; badge?: string; bare?: boolean };

const mainApps: DockItem[] = [
  { name: "Finder", icon: <FinderIcon />, open: true },
  { name: "Google Chrome", icon: <ChromeIcon />, open: true },
  { name: "Launchpad", icon: <LaunchpadIcon /> },
  { name: "Messages", icon: <MessagesIcon />, open: true, badge: "29" },
  { name: "Mail", icon: <MailIcon /> },
  { name: "FaceTime", icon: <FaceTimeIcon /> },
  { name: "Maps", icon: <MapsIcon />, open: true },
  { name: "Calendar", icon: <CalendarIcon /> },
  { name: "Contacts", icon: <ContactsIcon />, bare: true },
  { name: "Reminders", icon: <RemindersIcon /> },
  { name: "Notes", icon: <NotesIcon />, open: true },
  { name: "App Store", icon: <AppStoreIcon /> },
  { name: "System Preferences", icon: <SettingsIcon />, badge: "1" },
];

const recentApps: DockItem[] = [
  { name: "Visual Studio Code", icon: <CodeIcon />, open: true },
  { name: "Photo Booth", icon: <PhotoBoothIcon />, bare: true },
  { name: "TV", icon: <TvIcon /> },
];

function DockApp({ item }: { item: DockItem }) {
  return (
    <button aria-label={item.name} className="relative block size-[104px] shrink-0">
      {item.bare ? (
        item.icon
      ) : (
        <span className="block size-full overflow-hidden rounded-[24px]">{item.icon}</span>
      )}
      {item.badge && (
        <span className="absolute -top-[11px] -right-3.5 flex size-12 items-center justify-center rounded-full bg-[#e04b3f] text-[26px] leading-8 text-white shadow-[0_1px_4px_rgba(0,0,0,0.4)]">
          {item.badge}
        </span>
      )}
      {item.open && (
        <span className="absolute -bottom-7 left-1/2 size-2 -translate-x-1/2 rounded-full bg-[#a595c4]" />
      )}
    </button>
  );
}

const DockDivider = () => <span className="mx-3.5 h-[118px] w-0.5 bg-[#79559a]" />;

function Dock() {
  return (
    <footer className="flex shrink-0 justify-center bg-[radial-gradient(circle_at_72%_120%,#4b0d78_0,#3a0a66_8%,transparent_22%),linear-gradient(90deg,#05010f_0%,#0c0322_30%,#10012f_60%,#170038_100%)] pt-0.5 pb-2.5">
      <div className="flex h-[158px] items-start gap-8 rounded-[46px] border-2 border-white/20 bg-[linear-gradient(90deg,#1d1430_0%,#1f153a_38%,#271450_50%,#401466_62%,#481470_72%,#36145c_84%,#241444_100%)] px-5 pt-[19px]">
        {mainApps.map((a) => (
          <DockApp key={a.name} item={a} />
        ))}
        <DockDivider />
        {recentApps.map((a) => (
          <DockApp key={a.name} item={a} />
        ))}
        <DockDivider />
        <button aria-label="Downloads" className="-mt-3 shrink-0">
          <DiskImageIcon />
        </button>
        <button aria-label="Trash" className="-mt-3 shrink-0">
          <TrashIcon />
        </button>
      </div>
    </footer>
  );
}

export default function App() {
  return (
    <div className="flex min-h-screen flex-col bg-[#0a021c] font-['Inter',sans-serif]">
      <MenuBar />
      <div className="flex flex-1 flex-col bg-[linear-gradient(90deg,#07020f,#1a0440)] pt-0.5">
        <section className="relative flex flex-1 flex-col overflow-hidden rounded-[20px] bg-[#202124] pt-0.5">
          <TabStrip />
          <Toolbar />
          <LoginPage />
          <div className="pointer-events-none absolute inset-0 rounded-[20px] border-x border-t-2 border-white/30" />
        </section>
      </div>
      <Dock />
    </div>
  );
}
